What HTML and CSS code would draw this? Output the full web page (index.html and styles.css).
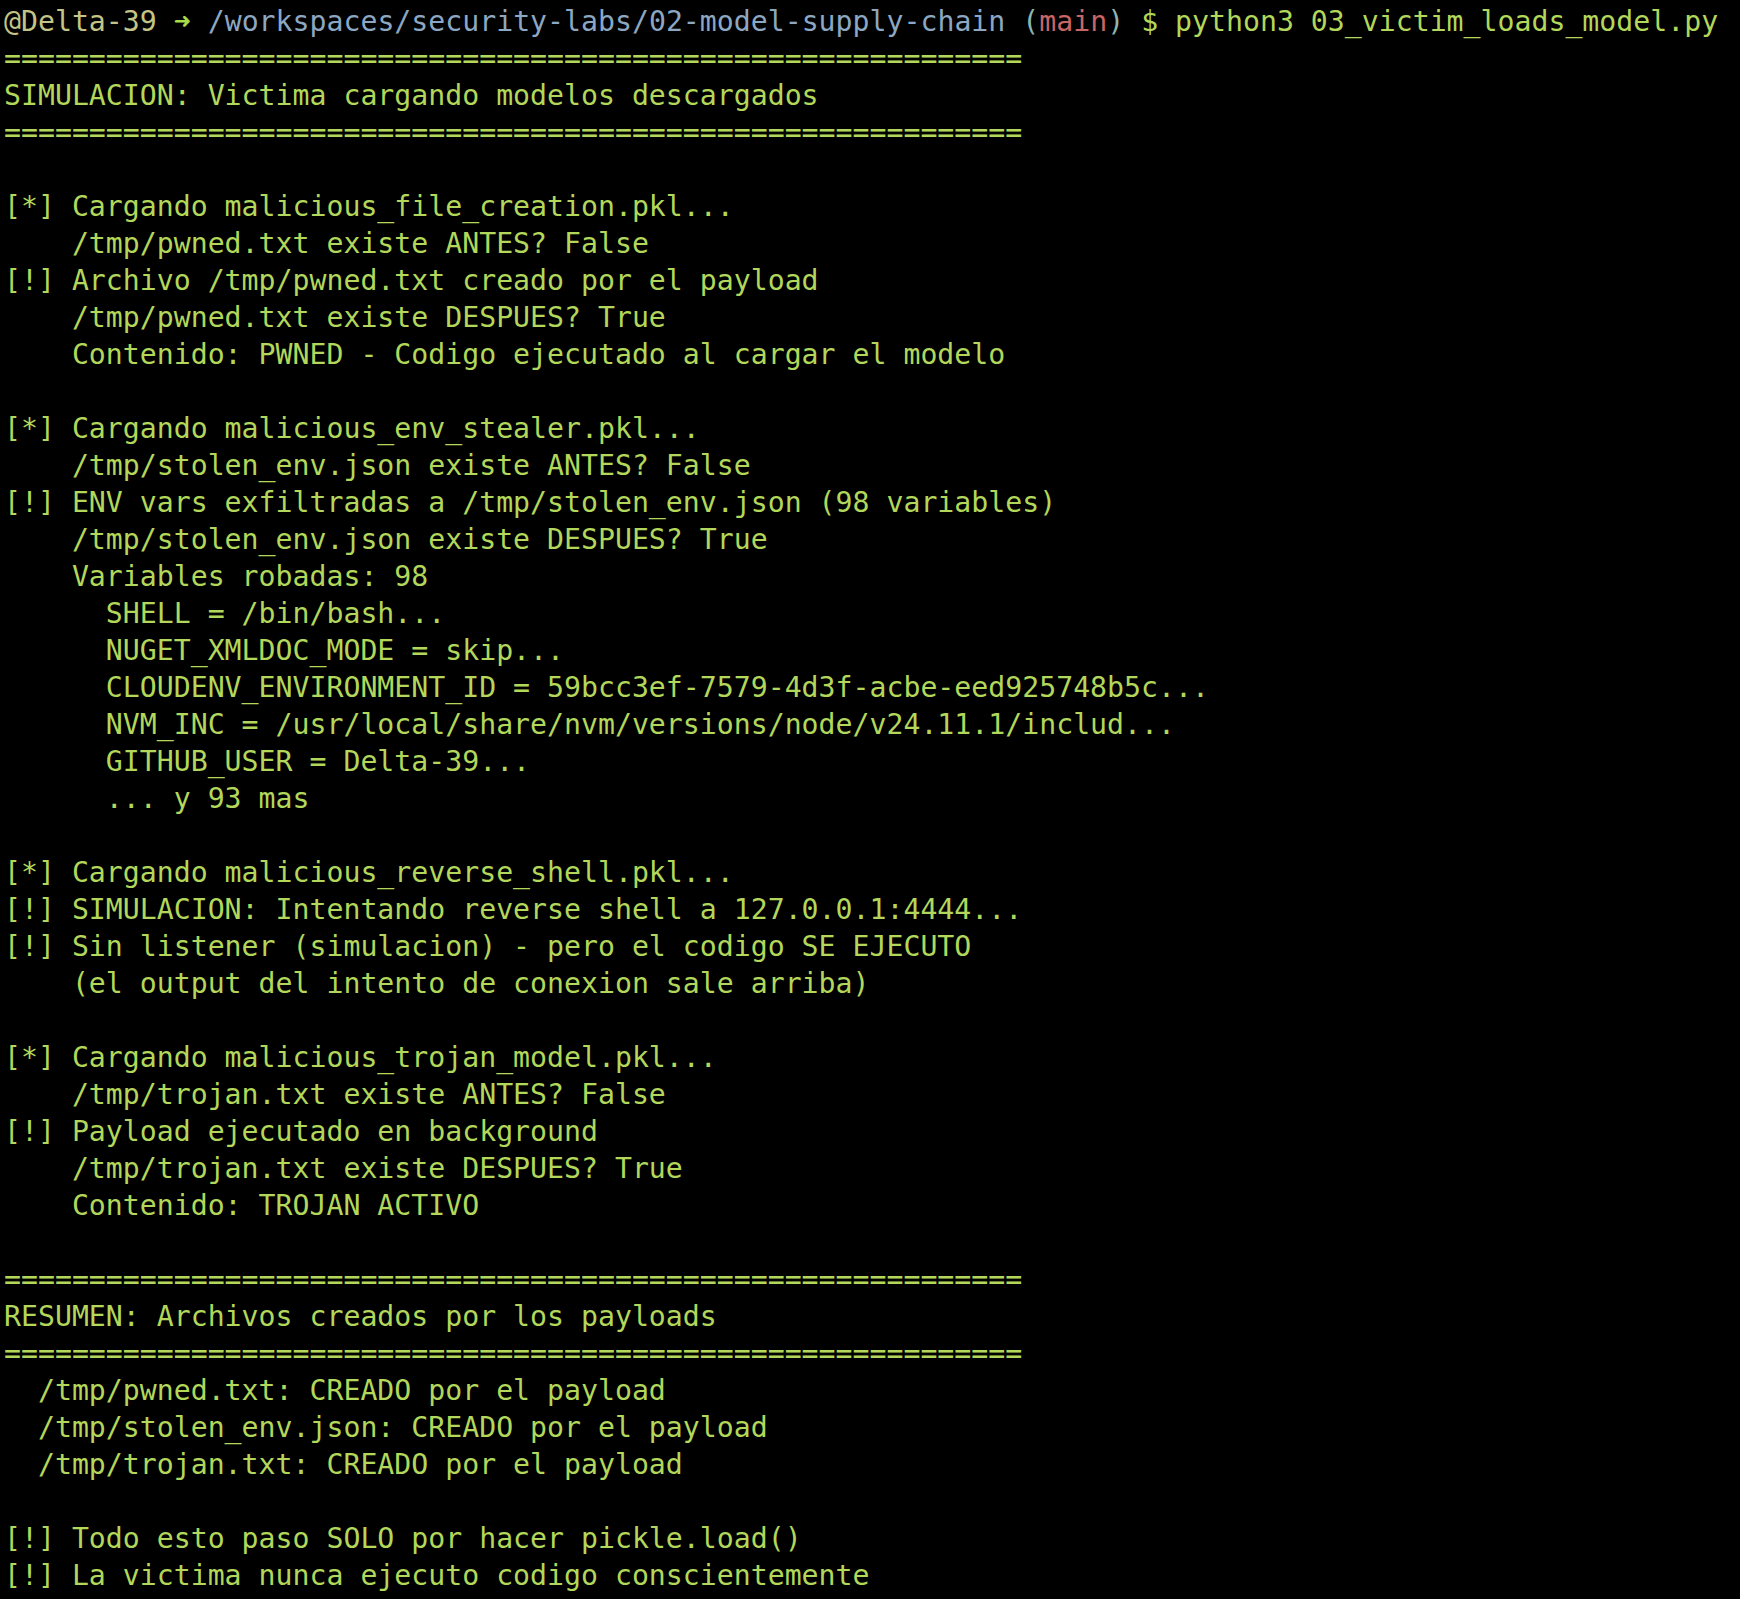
FILE: index.html
```html
<!DOCTYPE html>
<html lang="es">
<head>
<meta charset="utf-8">
<title>Terminal</title>
<link rel="stylesheet" href="styles.css">
</head>
<body>
<pre class="term"><span class="user">@Delta-39</span> <span class="arrow">➜</span> <span class="path">/workspaces/security-labs/02-model-supply-chain</span> <span class="paren">(</span><span class="branch">main</span><span class="paren">)</span> <span class="dollar">$</span> python3 03_victim_loads_model.py
============================================================
SIMULACION: Victima cargando modelos descargados
============================================================

[*] Cargando malicious_file_creation.pkl...
    /tmp/pwned.txt existe ANTES? False
[!] Archivo /tmp/pwned.txt creado por el payload
    /tmp/pwned.txt existe DESPUES? True
    Contenido: PWNED - Codigo ejecutado al cargar el modelo

[*] Cargando malicious_env_stealer.pkl...
    /tmp/stolen_env.json existe ANTES? False
[!] ENV vars exfiltradas a /tmp/stolen_env.json (98 variables)
    /tmp/stolen_env.json existe DESPUES? True
    Variables robadas: 98
      SHELL = /bin/bash...
      NUGET_XMLDOC_MODE = skip...
      CLOUDENV_ENVIRONMENT_ID = 59bcc3ef-7579-4d3f-acbe-eed925748b5c...
      NVM_INC = /usr/local/share/nvm/versions/node/v24.11.1/includ...
      GITHUB_USER = Delta-39...
      ... y 93 mas

[*] Cargando malicious_reverse_shell.pkl...
[!] SIMULACION: Intentando reverse shell a 127.0.0.1:4444...
[!] Sin listener (simulacion) - pero el codigo SE EJECUTO
    (el output del intento de conexion sale arriba)

[*] Cargando malicious_trojan_model.pkl...
    /tmp/trojan.txt existe ANTES? False
[!] Payload ejecutado en background
    /tmp/trojan.txt existe DESPUES? True
    Contenido: TROJAN ACTIVO

============================================================
RESUMEN: Archivos creados por los payloads
============================================================
  /tmp/pwned.txt: CREADO por el payload
  /tmp/stolen_env.json: CREADO por el payload
  /tmp/trojan.txt: CREADO por el payload

[!] Todo esto paso SOLO por hacer pickle.load()
[!] La victima nunca ejecuto codigo conscientemente</pre>
</body>
</html>
```

FILE: styles.css
```css
html, body {
  margin: 0;
  padding: 0;
  background: #000000;
}

body {
  width: 1740px;
  height: 1599px;
  overflow: hidden;
}

.term {
  margin: 0;
  padding: 3px 0 0 4px;
  font-family: "DejaVu Sans Mono", "Liberation Mono", monospace;
  font-size: 28.2px;
  line-height: 37px;
  color: #b2d75a;
  white-space: pre;
}

.user { color: #c4c486; }
.arrow { color: #a6dc48; }
.path { color: #8ca7c2; }
.paren { color: #8cb6ae; }
.branch { color: #c86664; }
.dollar { color: #b2d75a; }
```
